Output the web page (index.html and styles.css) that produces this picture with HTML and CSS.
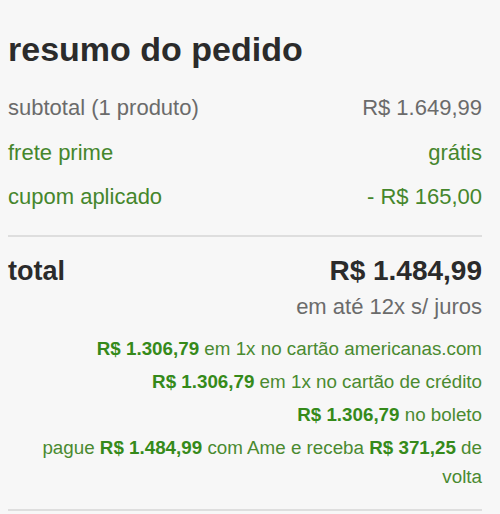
FILE: index.html
```html
<!DOCTYPE html>
<html lang="pt-BR">
<head>
    <meta charset="UTF-8">
    <meta name="viewport" content="width=device-width, initial-scale=1.0">
    <title>Resumo do pedido</title>
    <link rel="stylesheet" href="styles.css">
</head>
<body>
    <div class="summary">
        <h2>resumo do pedido</h2>

        <!-- Linhas do pedido -->
        <div class="row">
            <span>subtotal (1 produto)</span>
            <span>R$ 1.649,99</span>
        </div>
        <div class="row green">
            <span>frete prime</span>
            <span>grátis</span>
        </div>
        <div class="row green">
            <span>cupom aplicado</span>
            <span>- R$ 165,00</span>
        </div>

        <hr class="divider">

        <!-- Total -->
        <div class="total-row">
            <span class="total-label">total</span>
            <span class="total-value">R$ 1.484,99</span>
        </div>
        <div class="installments">em até 12x s/ juros</div>

        <div class="payments">
            <p><b>R$ 1.306,79</b> em 1x no cartão americanas.com</p>
            <p><b>R$ 1.306,79</b> em 1x no cartão de crédito</p>
            <p><b>R$ 1.306,79</b> no boleto</p>
            <p>pague <b>R$ 1.484,99</b> com Ame e receba <b>R$ 371,25</b> de volta</p>
        </div>

        <hr class="divider bottom">
    </div>
</body>
</html>
```

FILE: styles.css
```css
body {
    font-family: "Liberation Sans", Arial, sans-serif;
    margin: 0;
    padding: 0;
    background-color: #f7f7f7;
    color: #333;
}
.summary {
    width: 474px;
    padding: 29px 0 0 8px;
}
h2 {
    font-size: 34px;
    font-weight: bold;
    color: #2b2b2b;
    margin: 0 0 26px;
    line-height: 40px;
}
.row {
    display: flex;
    justify-content: space-between;
    font-size: 22px;
    line-height: 26px;
    color: #6b6b6b;
    margin-bottom: 18.5px;
}
.row.green {
    color: #45862c;
}
.divider {
    border: none;
    border-top: 2px solid #dedede;
    margin: 24.5px 0 18px;
}
.divider.bottom {
    margin-top: 18px;
}
.total-row {
    display: flex;
    justify-content: space-between;
    align-items: baseline;
    font-weight: bold;
    color: #2b2b2b;
    line-height: 32px;
}
.total-label {
    font-size: 27px;
}
.total-value {
    font-size: 28px;
}
.installments {
    text-align: right;
    font-size: 22px;
    line-height: 26px;
    color: #6b6b6b;
    margin-top: 7px;
}
.payments {
    margin-top: 14px;
    text-align: right;
    color: #4a8a30;
    font-size: 18.8px;
}
.payments p {
    margin: 0 0 4px;
    line-height: 29px;
}
.payments b {
    color: #358a1a;
}
```
